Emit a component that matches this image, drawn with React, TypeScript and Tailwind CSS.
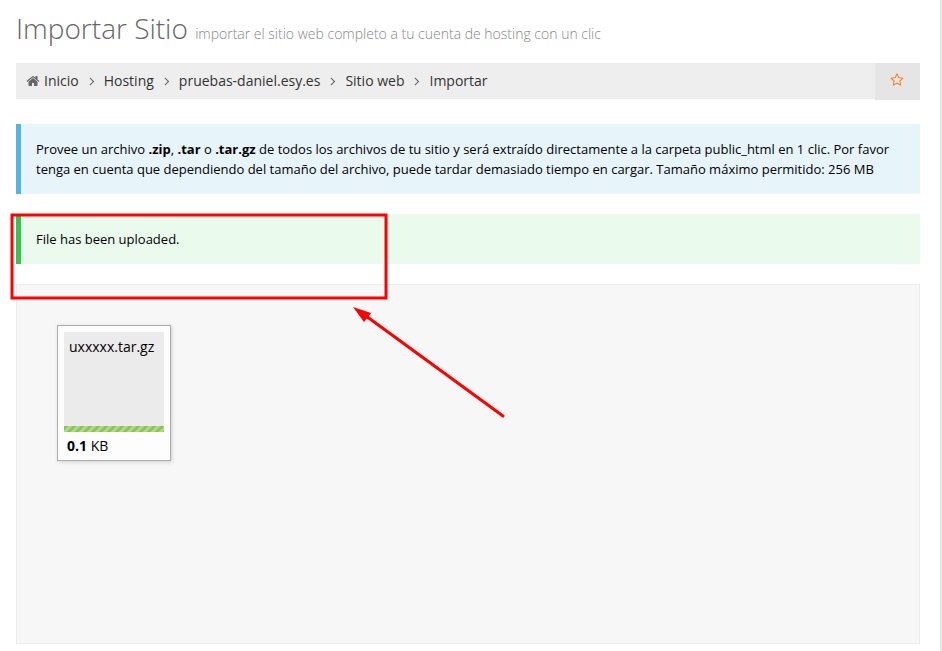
import React from 'react';

const HOME =
  'M1472 992v480q0 26-19 45t-45 19h-384v-384h-256v384h-384q-26 0-45-19t-19-45v-480q0-1 .5-3t.5-3l575-474 575 474q1 2 1 6zm223-69l-62 74q-8 9-21 11h-3q-13 0-21-7l-692-577-692 577q-12 8-24 7-13-2-21-11l-62-74q-8-10-7-23.500t11-21.500l719-599q32-26 76-26t76 26l244 204v-195q0-14 9-23t23-9h192q14 0 23 9t9 23v408l219 182q10 8 11 21.500t-7 23.500z';
const ANGLE =
  'M1171 960q0 13-10 23l-466 466q-10 10-23 10t-23-10l-50-50q-10-10-10-23t10-23l393-393-393-393q-10-10-10-23t10-23l50-50q10-10 23-10t23 10l466 466q10 10 10 23z';
const STAR =
  'M1201 1004l306-297-422-62-189-382-189 382-422 62 306 297-73 421 378-199 377 199zm527-357q0 22-26 48l-363 354 86 500q1 7 1 20 0 50-41 50-19 0-40-12l-449-236-449 236q-22 12-40 12-21 0-31.500-14.500t-10.500-35.500q0-6 2-20l86-500-364-354q-25-27-25-48 0-37 56-46l502-73 225-455q19-41 49-41t49 41l225 455 502 73q56 9 56 46z';

function Icon({ path, className }: { path: string; className: string }) {
  return (
    <svg viewBox="0 0 1792 1792" fill="currentColor" aria-hidden="true" className={className}>
      <path d={path} />
    </svg>
  );
}

const crumbs = ['Inicio', 'Hosting', 'pruebas-daniel.esy.es', 'Sitio web', 'Importar'];

function Breadcrumb() {
  return (
    <nav aria-label="Ruta" className="mt-3 flex h-9 bg-[#eee] text-sm text-[#333]">
      <ol className="flex flex-1 items-center pl-[10px]">
        {crumbs.map((name, i) => (
          <li key={name} className="flex items-center">
            {i === 0 ? (
              <Icon path={HOME} className="mr-1 size-[14px] text-[#666]" />
            ) : (
              <Icon path={ANGLE} className="mr-[5px] ml-[6px] size-[14px] text-[#666]" />
            )}
            <a href="#">{name}</a>
          </li>
        ))}
      </ol>
      <button
        type="button"
        aria-label="Favorito"
        className="flex h-[37px] w-[45px] items-center justify-center bg-[#e5e5e5] pr-px pb-1 text-[#fb7d15]"
      >
        <Icon path={STAR} className="size-[14px]" />
      </button>
    </nav>
  );
}

function Upload() {
  return (
    <article className="w-[114px] border border-[#acacac] bg-[#fdfdfd] p-[6px] pb-1 text-sm text-black shadow-[1px_1px_4px_rgba(0,0,0,0.16)]">
      <div className="flex h-[100px] flex-col justify-between bg-[#ebebeb]">
        <span className="p-[5px]">uxxxxx.tar.gz</span>
        <div
          role="progressbar"
          aria-label="Progreso"
          aria-valuenow={100}
          className="h-[6px] bg-[#8cc657] bg-[linear-gradient(-45deg,rgba(255,255,255,0.3)_25%,transparent_25%,transparent_50%,rgba(255,255,255,0.3)_50%,rgba(255,255,255,0.3)_75%,transparent_75%)] bg-[length:8px_8px]"
        />
      </div>
      <p className="pt-1 pl-[3px]">
        <strong>0.1</strong> KB
      </p>
    </article>
  );
}

export default function App() {
  return (
    <main className="relative min-h-screen border-r-2 border-[#e7e7e7] bg-white py-2 pr-5 pb-[7px] pl-4 font-['Open_Sans',sans-serif]">
      <h1 className="pb-[3px] text-[28px] leading-10 font-light text-[#666]">
        Importar Sitio{' '}
        <small className="text-sm font-light text-[#888]">
          importar el sitio web completo a tu cuenta de hosting con un clic
        </small>
      </h1>
      <Breadcrumb />
      <p className="mt-[25px] border-l-5 border-[#57b5e3] bg-[#e7f4fa] p-[15px] text-[13px] leading-5 text-black">
        Provee un archivo <b>.zip</b>, <b>.tar</b> o <b>.tar.gz</b> de todos los archivos de tu sitio y será extraído
        directamente a la carpeta public_html en 1 clic. Por favor tenga en cuenta que dependiendo del tamaño del
        archivo, puede tardar demasiado tiempo en cargar. Tamaño máximo permitido: 256 MB
      </p>
      <p
        role="status"
        className="mt-5 border-l-5 border-[#3cc051] bg-[#eafaed] p-[15px] text-[13px] leading-5 text-black"
      >
        File has been uploaded.
      </p>
      <section aria-label="Archivos" className="mt-5 min-h-[360px] border border-[#ededed] bg-[#f7f7f7] p-10">
        <Upload />
      </section>
      <svg
        aria-hidden="true"
        width="520"
        height="430"
        viewBox="0 0 520 430"
        className="pointer-events-none absolute top-0 left-0"
      >
        <rect x="12" y="215" width="374" height="83" fill="none" stroke="#f00" strokeWidth="3" />
        <path d="M366 316L503 416" stroke="#f00" strokeWidth="3" strokeLinecap="round" />
        <path d="M353 307L371 313L368 317L364 322Z" fill="#f00" />
      </svg>
    </main>
  );
}
